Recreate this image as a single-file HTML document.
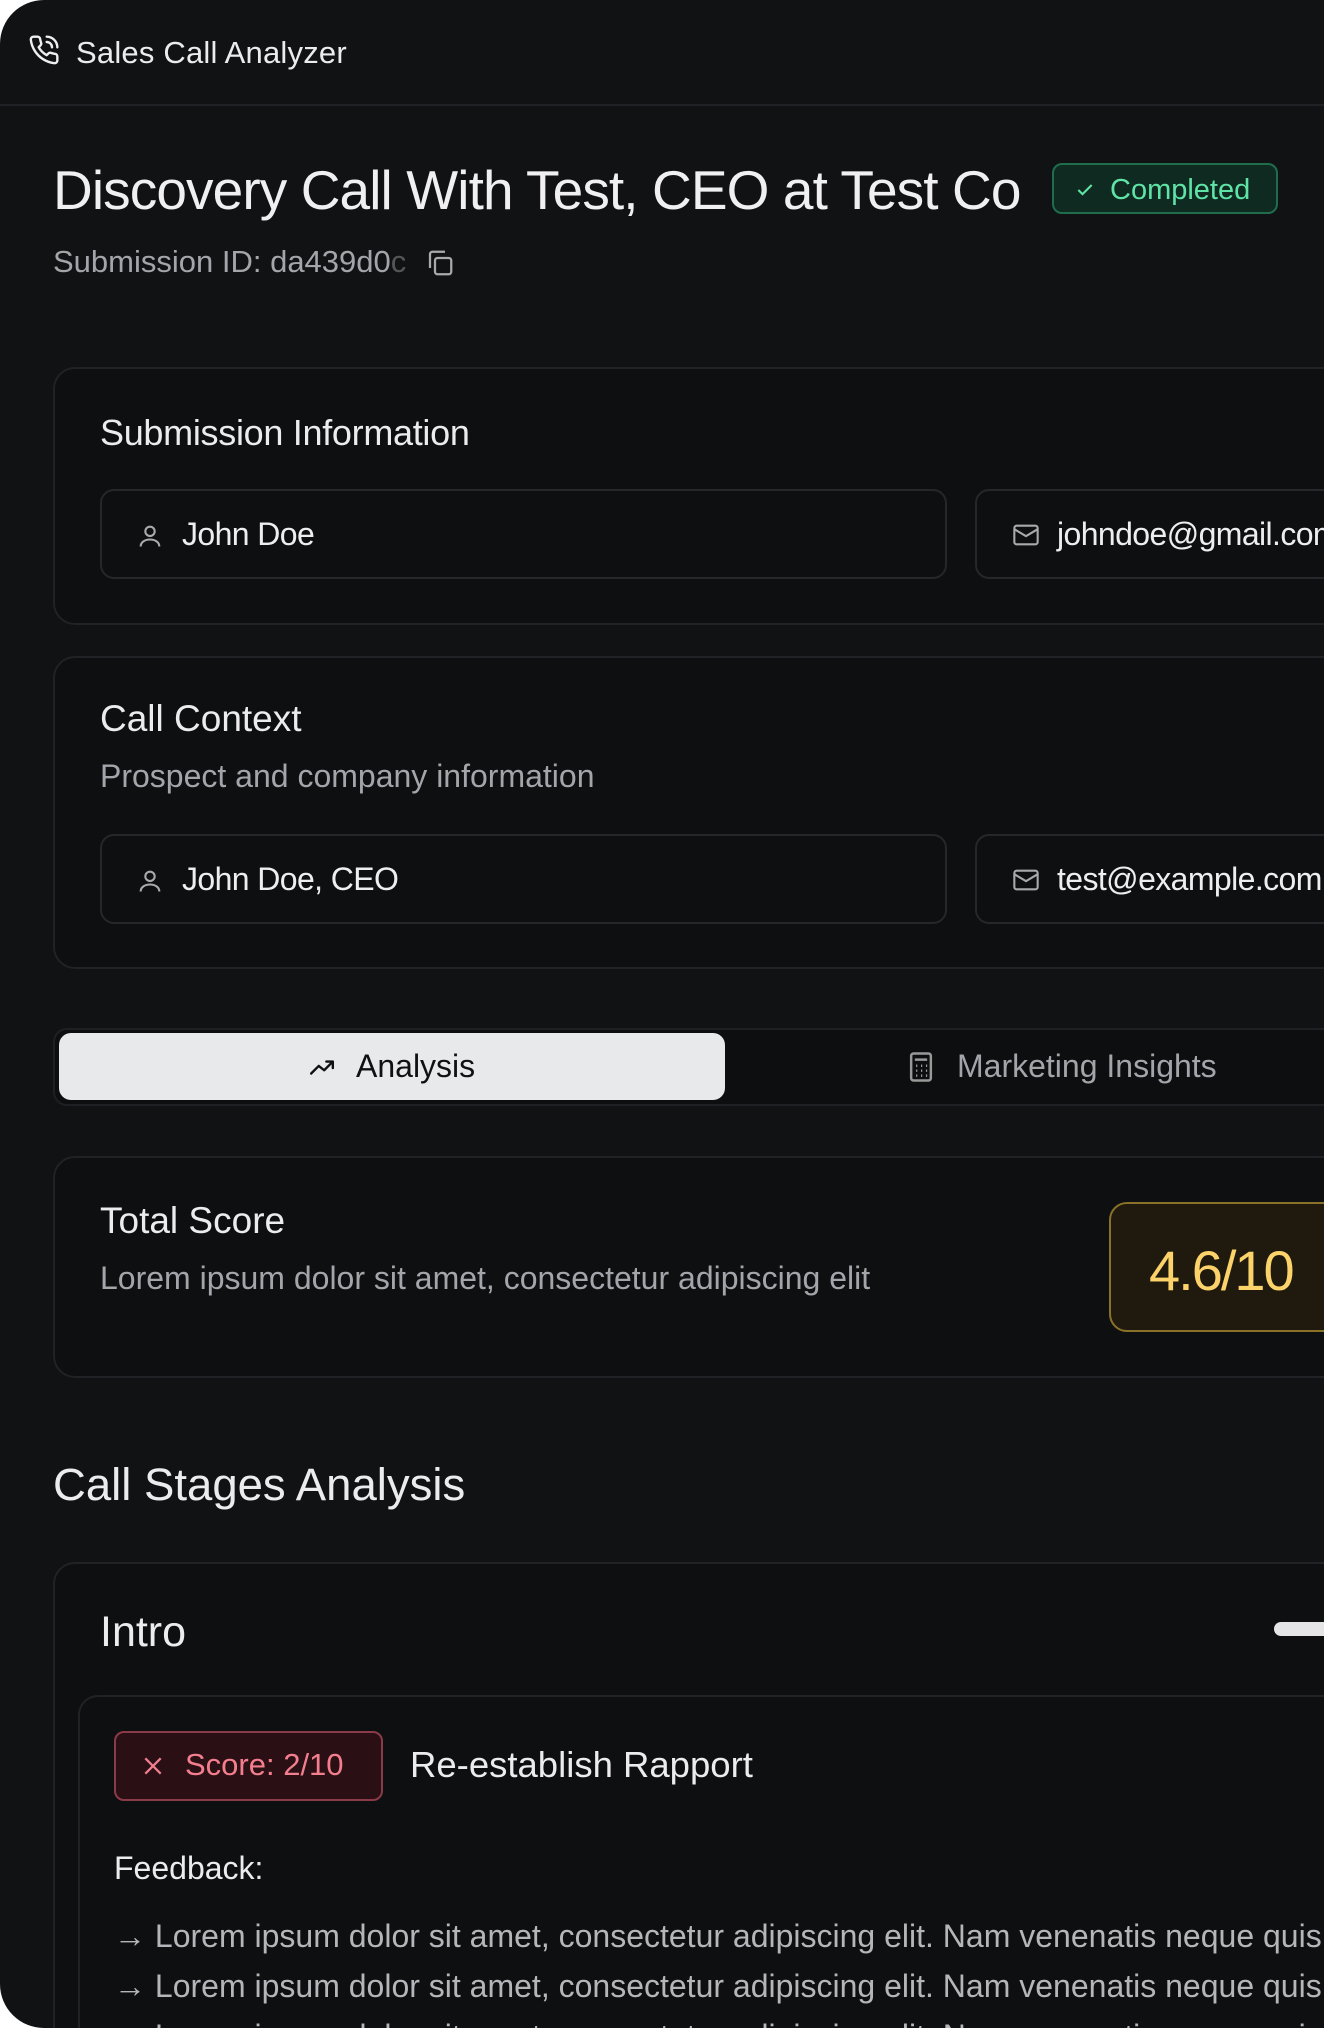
<!DOCTYPE html>
<html><head><meta charset="utf-8"><style>
*{box-sizing:border-box;margin:0;padding:0}
html,body{width:1324px;height:2028px;overflow:hidden;background:#fff}
body{font-family:"Liberation Sans",sans-serif;color:#ececee}
.app{position:absolute;left:0;top:0;width:1324px;height:2028px;background:#111214;border-radius:44px 0 0 44px;overflow:hidden}
.hdr{position:absolute;left:0;top:0;width:1324px;height:106px;border-bottom:2px solid #1f2124}
.abs{position:absolute;white-space:nowrap}
.card{position:absolute;left:53px;width:1320px;border:2px solid #202226;border-radius:22px;background:#0e0f11}
.inp{position:absolute;height:90px;border:2px solid #25272b;border-radius:14px;background:#0e0f11}
.inp span{position:absolute;left:80px;top:25px;font-size:32px;letter-spacing:-0.6px;color:#eee}
.inp svg{position:absolute;left:34px;top:30px}
.muted{color:#a3a5aa}
</style></head><body><div class="app">
<div class="hdr">
<svg class="abs" style="left:28px;top:34px" width="32" height="32" viewBox="0 0 24 24" fill="none" stroke="#eee" stroke-width="1.8" stroke-linecap="round" stroke-linejoin="round"><path d="M22 16.9v3a2 2 0 0 1-2.2 2 19.8 19.8 0 0 1-8.6-3.1 19.5 19.5 0 0 1-6-6A19.8 19.8 0 0 1 2.1 4.2 2 2 0 0 1 4.1 2h3a2 2 0 0 1 2 1.7c.1.9.4 1.9.7 2.8a2 2 0 0 1-.5 2.1L8 9.9a16 16 0 0 0 6 6l1.3-1.3a2 2 0 0 1 2.1-.4c.9.3 1.8.6 2.8.7A2 2 0 0 1 22 16.9z"/><path d="M14 2a8 8 0 0 1 8 8M14 6a4 4 0 0 1 4 4"/></svg>
<div class="abs" style="left:76px;top:35px;font-size:31px;letter-spacing:0.2px">Sales Call Analyzer</div>
</div>
<div class="abs" style="left:53px;top:158px;font-size:55px;letter-spacing:-0.9px;color:#f0f0f2">Discovery Call With Test, CEO at Test Co</div>
<div class="abs" style="left:1052px;top:163px;width:226px;height:51px;border:2px solid #1f6d4d;border-radius:10px;background:#0f2a20;color:#5fe3a6;font-size:29px;padding:9px 0 0 56px">Completed
<svg class="abs" style="left:20px;top:15px" width="22" height="20" viewBox="0 0 24 24" fill="none" stroke="#5fe3a6" stroke-width="2.5"><path d="M4 12l5 5L20 6"/></svg></div>
<div class="abs muted" style="left:53px;top:244px;font-size:31px">Submission ID: da439d0<span style="color:#555">c</span></div>
<svg class="abs" style="left:424px;top:248px" width="32" height="30" viewBox="0 0 24 24" fill="none" stroke="#aaa" stroke-width="1.8"><rect x="8" y="8" width="13" height="13" rx="2"/><path d="M4 16V5a2 2 0 0 1 2-2h10"/></svg>

<div class="card" style="top:367px;height:258px">
<div class="abs" style="left:45px;top:43px;font-size:36px;letter-spacing:-0.3px">Submission Information</div>
<div class="inp" style="left:45px;top:120px;width:847px"><svg width="28" height="30" viewBox="0 0 24 24" fill="none" stroke="#aaa" stroke-width="1.8"><circle cx="12" cy="8" r="4"/><path d="M4 21c0-4 4-6 8-6s8 2 8 6"/></svg><span>John Doe</span></div>
<div class="inp" style="left:920px;top:120px;width:500px"><svg width="30" height="28" viewBox="0 0 24 24" fill="none" stroke="#aaa" stroke-width="1.8"><rect x="2" y="4" width="20" height="16" rx="2"/><path d="M2 7l10 6 10-6"/></svg><span>johndoe@gmail.com</span></div>
</div>

<div class="card" style="top:656px;height:313px">
<div class="abs" style="left:45px;top:40px;font-size:37px">Call Context</div>
<div class="abs muted" style="left:45px;top:100px;font-size:32px">Prospect and company information</div>
<div class="inp" style="left:45px;top:176px;width:847px"><svg width="28" height="30" viewBox="0 0 24 24" fill="none" stroke="#aaa" stroke-width="1.8"><circle cx="12" cy="8" r="4"/><path d="M4 21c0-4 4-6 8-6s8 2 8 6"/></svg><span>John Doe, CEO</span></div>
<div class="inp" style="left:920px;top:176px;width:500px"><svg width="30" height="28" viewBox="0 0 24 24" fill="none" stroke="#aaa" stroke-width="1.8"><rect x="2" y="4" width="20" height="16" rx="2"/><path d="M2 7l10 6 10-6"/></svg><span>test@example.com</span></div>
</div>

<div class="abs" style="left:53px;top:1028px;width:1320px;height:78px;border:2px solid #1e2023;border-radius:14px;background:#0d0e10"></div>
<div class="abs" style="left:59px;top:1033px;width:666px;height:67px;border-radius:12px;background:#e8e9eb"></div>
<svg class="abs" style="left:306px;top:1054px" width="32" height="26" viewBox="0 0 24 24" fill="none" stroke="#111" stroke-width="2.2" stroke-linecap="round" stroke-linejoin="round"><path d="M2 18l7-7 5 4 8-8M16 7h6v6"/></svg>
<div class="abs" style="left:356px;top:1048px;font-size:32px;color:#111">Analysis</div>
<svg class="abs" style="left:908px;top:1051px" width="26" height="32" viewBox="0 0 20 26" fill="none" stroke="#999" stroke-width="2"><rect x="2" y="2" width="16" height="22" rx="2"/><path d="M5 7h10M6 12h1M10 12h1M14 12h1M6 16h1M10 16h1M14 16h1M6 20h1M10 20h1M14 20h1"/></svg>
<div class="abs muted" style="left:957px;top:1048px;font-size:32px">Marketing Insights</div>

<div class="card" style="top:1156px;height:222px">
<div class="abs" style="left:45px;top:42px;font-size:37px">Total Score</div>
<div class="abs muted" style="left:45px;top:102px;font-size:32px">Lorem ipsum dolor sit amet, consectetur adipiscing elit</div>
<div class="abs" style="left:1054px;top:44px;width:260px;height:130px;border:2px solid #8a7128;border-radius:18px;background:#1f1a0d"></div>
<div class="abs" style="left:1094px;top:80px;font-size:56px;letter-spacing:-2px;color:#fbd36a">4.6/10</div>
</div>

<div class="abs" style="left:53px;top:1459px;font-size:45.5px">Call Stages Analysis</div>

<div class="card" style="top:1562px;height:520px">
<div class="abs" style="left:45px;top:44px;font-size:43px">Intro</div>
<div class="abs" style="left:1219px;top:58px;width:100px;height:14px;border-radius:7px;background:#e5e5e7"></div>
<div class="abs" style="left:23px;top:131px;width:1320px;height:500px;border:2px solid #202226;border-radius:20px;background:#0e0f11">
<div class="abs" style="left:34px;top:34px;width:269px;height:70px;border:2px solid #8b3a47;border-radius:10px;background:#2a0f14"></div>
<svg class="abs" style="left:62px;top:58px" width="22" height="22" viewBox="0 0 20 20" stroke="#f07f8f" stroke-width="2"><path d="M3 3l14 14M17 3L3 17"/></svg>
<div class="abs" style="left:105px;top:50px;font-size:31px;color:#f37e8e">Score: 2/10</div>
<div class="abs" style="left:330px;top:47px;font-size:36.5px">Re-establish Rapport</div>
<div class="abs" style="left:34px;top:153px;font-size:32px">Feedback:</div>
<div class="abs muted" style="left:34px;top:214px;font-size:32px;line-height:50px;color:#b4b6ba">→ Lorem ipsum dolor sit amet, consectetur adipiscing elit. Nam venenatis neque quis lorem<br>→ Lorem ipsum dolor sit amet, consectetur adipiscing elit. Nam venenatis neque quis lorem<br>→ Lorem ipsum dolor sit amet, consectetur adipiscing elit. Nam venenatis neque quis lorem</div>
</div>
</div>
</div></body></html>
